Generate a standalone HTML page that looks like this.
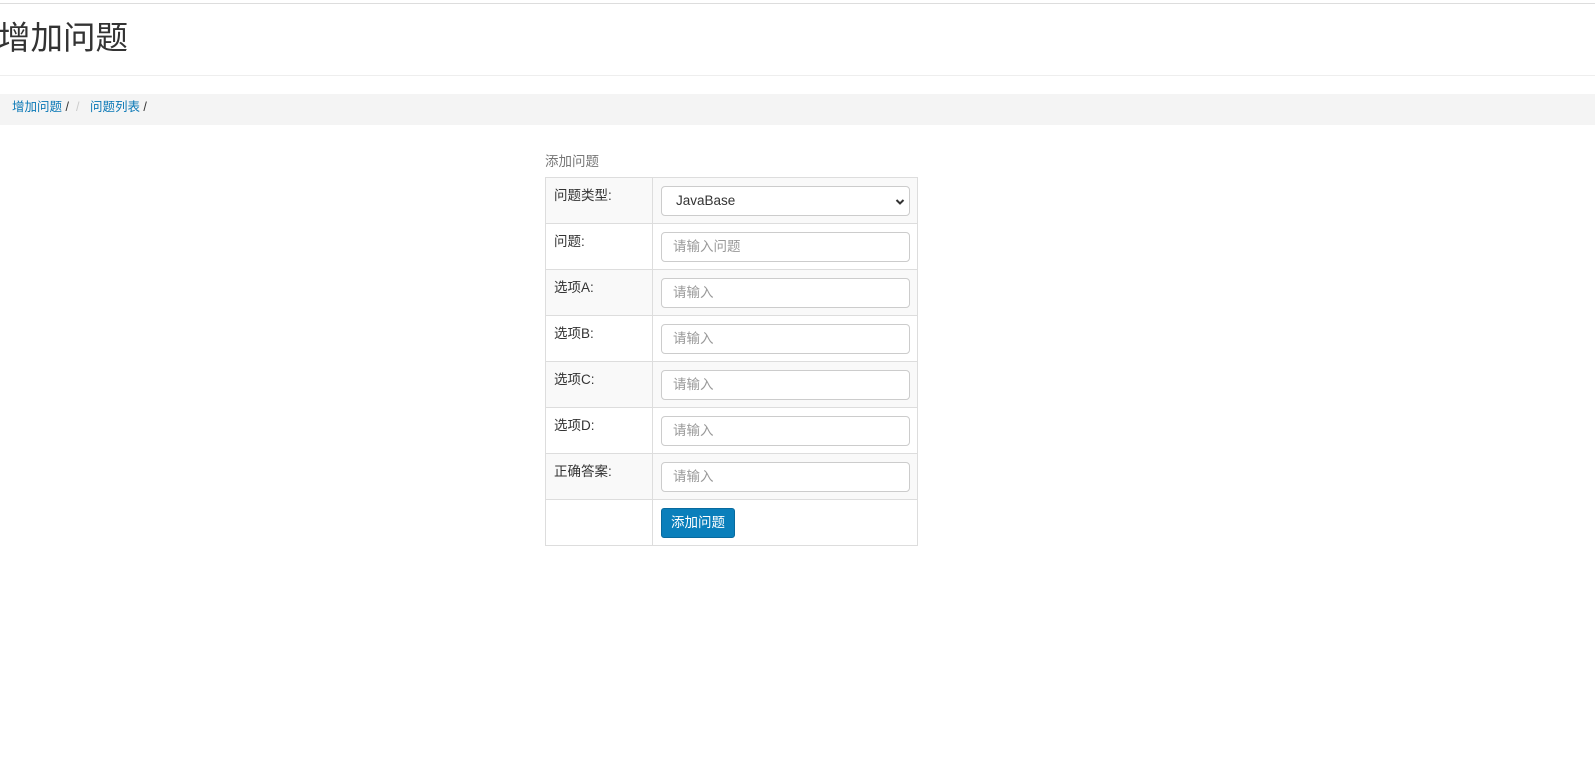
<!DOCTYPE html>
<html><head><meta charset="utf-8"><style>
*{box-sizing:border-box}
body{margin:0;font-family:"Liberation Sans","Noto Sans CJK SC",sans-serif;font-size:13.5px;color:#333;background:#fff;width:1595px;height:771px;overflow:hidden;position:relative}
.top{position:absolute;top:3px;left:0;right:0;border-top:1px solid #ddd}
h1{position:absolute;left:-2px;top:17px;margin:0;font-weight:400;font-size:32.5px;line-height:42px;color:#333}
.hr{position:absolute;top:75px;left:0;right:0;border-top:1px solid #eee}
.bc{position:absolute;top:94px;left:0;right:0;height:31px;background:#f4f4f4;padding-left:12px;line-height:26px;font-size:12.5px}
.bc a{color:#0a78b6;text-decoration:none}
.bc .s{color:#ccc;margin:0 7px}
.cap{position:absolute;left:545px;top:150px;color:#777;font-size:13.5px}
table{position:absolute;left:545px;top:177px;border-collapse:collapse;width:373px}
td{border:1px solid #ddd;height:46px;vertical-align:top;padding:0}
td.l{width:108px;padding:6px 0 0 8px;color:#333}
tr:nth-child(odd){background:#f9f9f9}
td.r{padding:8px 7px 0 8px}
.in{width:249px;height:30px;border:1px solid #ccc;border-radius:4px;background:#fff;color:#999;font-size:13.5px;line-height:28px;padding-left:11px;position:relative}
.sel{color:#333;padding-left:14px}
.sel svg{position:absolute;right:4px;top:11px}
.btn{display:inline-block;background:#0a7fbb;color:#fff;border:1px solid #086a9e;border-radius:3px;height:30px;line-height:28px;width:74px;text-align:center;font-size:13.5px}
</style></head><body>
<div class="top"></div>
<h1>增加问题</h1>
<div class="hr"></div>
<div class="bc"><a>增加问题</a> /<span class="s">/</span> <a>问题列表</a> /</div>
<div class="cap">添加问题</div>
<table>
<tr><td class="l">问题类型:</td><td class="r"><div class="in sel">JavaBase<svg width="10" height="8" viewBox="0 0 10 8"><path d="M1.5 2l3.5 3.5L8.5 2" fill="none" stroke="#333" stroke-width="2"/></svg></div></td></tr>
<tr><td class="l">问题:</td><td class="r"><div class="in">请输入问题</div></td></tr>
<tr><td class="l">选项A:</td><td class="r"><div class="in">请输入</div></td></tr>
<tr><td class="l">选项B:</td><td class="r"><div class="in">请输入</div></td></tr>
<tr><td class="l">选项C:</td><td class="r"><div class="in">请输入</div></td></tr>
<tr><td class="l">选项D:</td><td class="r"><div class="in">请输入</div></td></tr>
<tr><td class="l">正确答案:</td><td class="r"><div class="in">请输入</div></td></tr>
<tr><td class="l"></td><td class="r"><span class="btn">添加问题</span></td></tr>
</table>
</body></html>
